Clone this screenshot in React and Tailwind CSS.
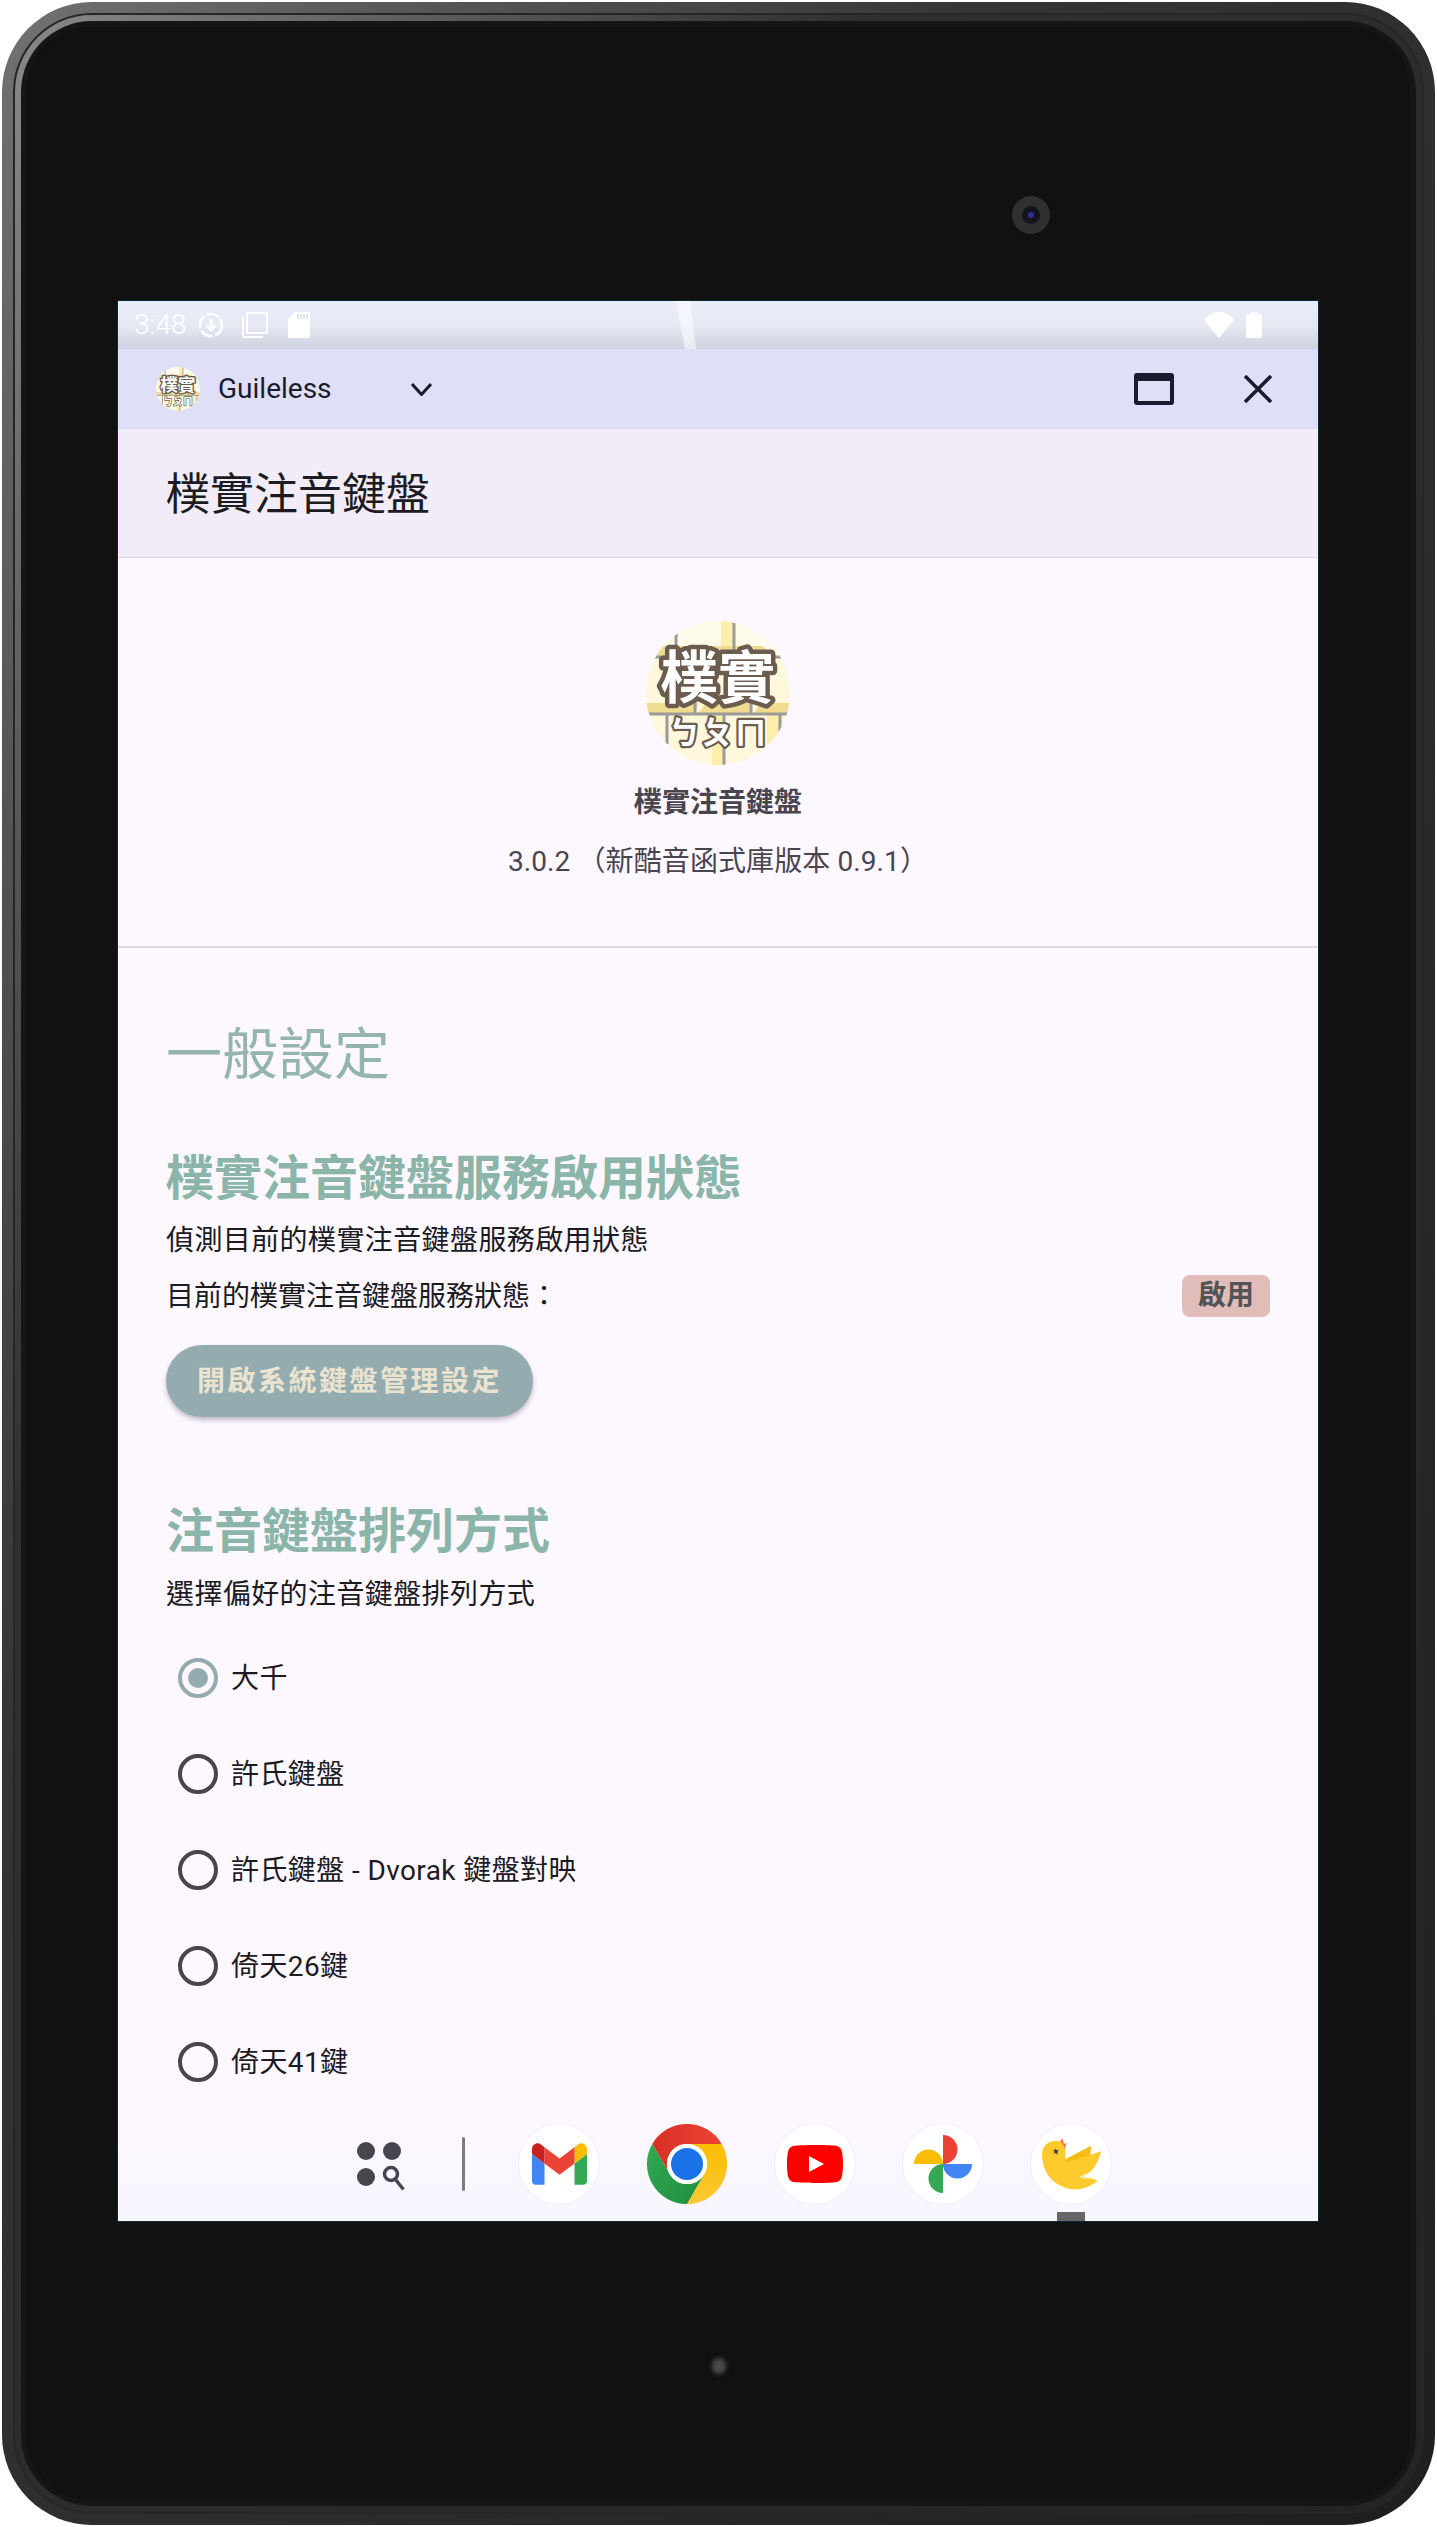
import React from 'react';

const layouts = ['大千', '許氏鍵盤', '許氏鍵盤 - Dvorak 鍵盤對映', '倚天26鍵', '倚天41鍵'];

function AppLogo({ className }) {
  return (
    <svg viewBox="0 0 144 144" className={className}>
      <circle cx="72" cy="72" r="72" fill="#fff8dc" />
      <rect x="0" y="0" width="144" height="36" fill="#fffbea" />
      <path d="M75 0h12v30l-12-5z" fill="#fdeeaa" />
      <path d="M4 36l12-11h100l14 11z" fill="#efdc90" />
      <path d="M0 93V82h52l-3 11zM52 93l8-11h44l1 11zM108 93l6-11h30v11z" fill="#efdc90" />
      <path d="M66 93h12v51H66zM121 93h12v30h-12z" fill="#fdeeaa" />
      <path d="M0 36h144M0 93h144M88 0v36M30 10v26M49 70v23M105 70v23M21 93v30M78 93v51M134 93v18" stroke="#9a9a9a" strokeWidth="3" fill="none" />
      <text x="72" y="77" textAnchor="middle" fontSize="57" fontWeight="700" fill="#ffffff" stroke="#6b5c50" strokeWidth="9" strokeLinejoin="round" paintOrder="stroke" className="font-['Noto_Sans_CJK_TC',sans-serif]">樸實</text>
      <text x="72" y="123" textAnchor="middle" fontSize="32" fontWeight="700" letterSpacing="1" fill="#ffffff" stroke="#6b5c50" strokeWidth="4.5" strokeLinejoin="round" paintOrder="stroke" className="font-['Noto_Sans_CJK_TC',sans-serif]">ㄅㄆㄇ</text>
    </svg>
  );
}

function StatusBar() {
  return (
    <div className="relative h-[48px] flex items-center pl-[16px] pr-[56px] bg-linear-to-b from-[#e9edf7] via-[#e6e9f4] to-[#cfd2de] text-white overflow-hidden">
      <svg className="absolute left-[556px] top-0 h-[48px] w-[30px]" viewBox="0 0 30 48">
        <path d="M2 0h14l6 48H11z" fill="#ffffff" opacity="0.55" />
      </svg>
      <span className="text-[28px] leading-[48px] font-[Roboto,sans-serif] font-light w-[53px]">3:48</span>
      <svg viewBox="0 0 26 26" className="w-[26px] h-[26px] ml-[11px]" fill="none" stroke="#ffffff" strokeWidth="2.5">
        <circle cx="13" cy="13" r="11" strokeDasharray="13 2.5" />
        <path d="M13 7v11M8.5 13.5 13 18l4.5-4.5" />
      </svg>
      <svg viewBox="0 0 26 26" className="w-[26px] h-[26px] ml-[18px]" fill="none" stroke="#ffffff" strokeWidth="2">
        <rect x="5" y="1" width="20" height="20" />
        <path d="M1 5v18a2 2 0 0 0 2 2h18" />
      </svg>
      <svg viewBox="0 0 22 26" className="w-[22px] h-[26px] ml-[20px]">
        <path d="M7 0h13a2 2 0 0 1 2 2v22a2 2 0 0 1-2 2H2a2 2 0 0 1-2-2V7z" fill="#ffffff" />
        <path d="M10 2v5M13 2v5M16 2v5M19 2v5" stroke="#d8dbe6" strokeWidth="1.5" />
      </svg>
      <div className="ml-auto flex items-center gap-[12px]">
        <svg viewBox="0 0 30 26" className="w-[30px] h-[26px]">
          <path d="M0 8C4 3 9 0 15 0s11 3 15 8L15 26z" fill="#ffffff" />
        </svg>
        <svg viewBox="0 0 16 26" className="w-[16px] h-[26px]">
          <path d="M5 0h6v2h3a2 2 0 0 1 2 2v20a2 2 0 0 1-2 2H2a2 2 0 0 1-2-2V4a2 2 0 0 1 2-2h3z" fill="#ffffff" />
        </svg>
      </div>
    </div>
  );
}

function CaptionBar() {
  return (
    <div className="h-[80px] flex items-center bg-[#dfdff7] pl-[38px] pr-[46px] text-[#1a1c2e]">
      <AppLogo className="w-[44px] h-[44px] rounded-full" />
      <span className="ml-[18px] text-[28px] leading-[36px] font-[Roboto,sans-serif] w-[113px]">Guileless</span>
      <svg viewBox="0 0 21 13" className="ml-[80px] w-[21px] h-[13px]" fill="none" stroke="#1a1c2e" strokeWidth="3">
        <path d="M1 1l9.5 10.5L20 1" />
      </svg>
      <svg viewBox="0 0 40 32" className="ml-auto w-[40px] h-[32px]">
        <rect x="0" y="0" width="40" height="32" rx="3" fill="#1a1c2e" />
        <rect x="4" y="8" width="32" height="20" fill="#dfdff7" />
      </svg>
      <svg viewBox="0 0 28 28" className="ml-[70px] w-[28px] h-[28px]" stroke="#1a1c2e" strokeWidth="3.6">
        <path d="M1 1l26 26M27 1L1 27" />
      </svg>
    </div>
  );
}

function GmailIcon() {
  return (
    <svg viewBox="52 42 88 66" className="w-[55px] h-[42px]">
      <path fill="#4285f4" d="M58 108h14V74L52 59v43c0 3.32 2.69 6 6 6" />
      <path fill="#34a853" d="M120 108h14c3.32 0 6-2.69 6-6V59l-20 15" />
      <path fill="#fbbc04" d="M120 48v26l20-15v-8c0-7.42-8.47-11.65-14.4-7.2" />
      <path fill="#ea4335" d="M72 74V48l24 18 24-18v26L96 92" />
      <path fill="#c5221f" d="M52 51v8l20 15V48l-5.6-4.2c-5.94-4.45-14.4-.22-14.4 7.2" />
    </svg>
  );
}

function ChromeIcon() {
  return (
    <svg viewBox="0 0 48 48" className="w-[80px] h-[80px]">
      <defs>
        <linearGradient id="chromeRed" x1="0" y1="0" x2="1" y2="0">
          <stop offset="0" stopColor="#d93025" />
          <stop offset="1" stopColor="#ea4335" />
        </linearGradient>
        <linearGradient id="chromeGreen" x1="0" y1="0" x2="1" y2="1">
          <stop offset="0" stopColor="#34a853" />
          <stop offset="1" stopColor="#1e8e3e" />
        </linearGradient>
        <linearGradient id="chromeYellow" x1="0" y1="0" x2="0" y2="1">
          <stop offset="0" stopColor="#fbbc04" />
          <stop offset="1" stopColor="#fcc934" />
        </linearGradient>
      </defs>
      <path fill="url(#chromeRed)" d="M3.2 12A24 24 0 0 1 44.8 12H24A12 12 0 0 0 13.6 30z" />
      <path fill="url(#chromeYellow)" d="M44.8 12A24 24 0 0 1 24 48L34.4 30A12 12 0 0 0 24 12z" />
      <path fill="url(#chromeGreen)" d="M3.2 12A24 24 0 0 0 24 48L34.4 30A12 12 0 0 1 13.6 30z" />
      <circle cx="24" cy="24" r="12" fill="#ffffff" />
      <circle cx="24" cy="24" r="9.6" fill="#1a73e8" />
    </svg>
  );
}

function YoutubeIcon() {
  return (
    <svg viewBox="0 0 56 38" className="w-[56px] h-[38px]">
      <path fill="#ff0000" d="M54.8 5.9a7 7 0 0 0-5-5C45.4 0 28 0 28 0S10.6 0 6.2 1a7 7 0 0 0-5 5C0 10.3 0 19 0 19s0 8.7 1.2 13.1a7 7 0 0 0 5 5C10.6 38 28 38 28 38s17.4 0 21.8-1a7 7 0 0 0 5-5C56 27.7 56 19 56 19s0-8.7-1.2-13.1z" />
      <path fill="#ffffff" d="M22 27l15-8-15-8z" />
    </svg>
  );
}

function PhotosIcon() {
  return (
    <svg viewBox="0 0 58 58" className="w-[58px] h-[58px]">
      <path fill="#ea4335" d="M29 0A14.5 14.5 0 0 1 29 29z" />
      <path fill="#fbbc04" d="M0 29A14.5 14.5 0 0 1 29 29z" />
      <path fill="#4285f4" d="M29 29H58A14.5 14.5 0 0 1 29 29z" />
      <path fill="#34a853" d="M29 29V58A14.5 14.5 0 0 1 29 29z" />
    </svg>
  );
}

function BirdIcon() {
  return (
    <svg viewBox="390 15 240 240" className="w-[80px] h-[80px]">
      <path fill="#ff7043" d="M470 78l14-20 5 17 8-4-6 22z" />
      <path fill="#f4bd16" d="M490 122l80-42-2 30-76 24z" />
      <path fill="#ffca2c" d="M423 105c0-25 20-40 42-40 20 0 30 20 28 45v23l107-36c-10 43-30 68-60 75 15 3 35 6 50 13-30 25-70 33-100 20-45-15-67-55-67-100z" />
      <path fill="none" stroke="#ffffff" strokeWidth="3" d="M535 170c8 6 14 8 22 8M548 166c4 6 8 9 16 12" />
      <path fill="#3a3a3a" d="M463 87l4 7 7-1-5 6 2 8-7-5-6 3 3-7-5-5 7 0z" />
    </svg>
  );
}

function DockApp({ children, running }) {
  return (
    <div className="relative w-[80px] h-[80px] rounded-full bg-white shadow-[0_0_2px_rgba(0,0,0,0.1)] flex items-center justify-center">
      {children}
      {running && <div className="absolute left-[26px] top-[88px] w-[28px] h-[9px] bg-[#666666]" />}
    </div>
  );
}

function Taskbar() {
  return (
    <div className="h-[120px] flex items-center pl-[239px] pt-[6px] bg-linear-to-b from-[#fdf7ff] to-[#f8f6ff]">
      <svg viewBox="0 0 50 44" className="w-[50px] h-[44px] overflow-visible" fill="#49454f">
        <circle cx="9" cy="9" r="9" />
        <circle cx="35" cy="9" r="9" />
        <circle cx="9" cy="35" r="9" />
        <circle cx="34" cy="32" r="6.5" fill="none" stroke="#49454f" strokeWidth="3.5" />
        <path d="M38.5 37.5l8 10" stroke="#49454f" strokeWidth="3.5" fill="none" />
      </svg>
      <div className="ml-[55px] w-[3px] h-[54px] rounded-full bg-[#7d7a84]" />
      <div className="ml-[54px] flex gap-[48px]">
        <DockApp><GmailIcon /></DockApp>
        <DockApp><ChromeIcon /></DockApp>
        <DockApp><YoutubeIcon /></DockApp>
        <DockApp><PhotosIcon /></DockApp>
        <DockApp running><BirdIcon /></DockApp>
      </div>
    </div>
  );
}

function RadioRow({ label, selected }) {
  return (
    <div className="h-[96px] pl-[12px] flex items-center gap-[13px]">
      <div className={`w-[40px] h-[40px] rounded-full border-[4px] flex items-center justify-center ${selected ? 'border-[#94acb0]' : 'border-[#49454f]'}`}>
        {selected && <div className="w-[20px] h-[20px] rounded-full bg-[#94acb0]" />}
      </div>
      <span className="pt-[2px] text-[28px] leading-[40px] tracking-[0.4px] text-[#1c1b1f]">{label}</span>
    </div>
  );
}

function Settings() {
  return (
    <div className="flex-1 overflow-hidden bg-[#fdf7ff] font-[Roboto,'Noto_Sans_CJK_TC',sans-serif]">
      <div className="flex flex-col items-center pt-[63px] pb-[64px] text-[#49454f]">
        <AppLogo className="w-[144px] h-[144px] rounded-full" />
        <p className="mt-[18px] text-[28px] leading-[40px] font-bold">樸實注音鍵盤</p>
        <p className="mt-[19px] text-[28px] leading-[40px] tracking-[0.1px]">3.0.2 （新酷音函式庫版本 0.9.1）</p>
      </div>
      <div className="h-[2px] bg-[#dcdadc]" />
      <div className="px-[48px] pt-[71px]">
        <h2 className="text-[56px] leading-[72px] font-normal text-[#94b5ad]">一般設定</h2>
        <h3 className="mt-[56px] text-[48px] leading-[64px] font-bold text-[#8ab5a8]">樸實注音鍵盤服務啟用狀態</h3>
        <p className="mt-[10px] text-[28px] leading-[40px] tracking-[0.4px] text-[#1c1b1f]">偵測目前的樸實注音鍵盤服務啟用狀態</p>
        <div className="mt-[14px] flex items-center justify-between">
          <span className="pt-[2px] text-[28px] leading-[40px] text-[#1c1b1f]">目前的樸實注音鍵盤服務狀態：</span>
          <span className="w-[88px] h-[42px] flex items-center justify-center rounded-[8px] bg-[#e0bdb8] text-[28px] leading-[40px] font-bold text-[#545454]">啟用</span>
        </div>
        <button className="mt-[28px] pt-[2px] w-[367px] h-[72px] rounded-full bg-[#94acb0] text-[28px] font-bold tracking-[2.5px] text-[#e9e3cf] shadow-[0_3px_5px_rgba(0,0,0,0.25)]">開啟系統鍵盤管理設定</button>
        <h3 className="mt-[83px] text-[48px] leading-[64px] font-bold text-[#8ab5a8]">注音鍵盤排列方式</h3>
        <p className="mt-[11px] text-[28px] leading-[40px] tracking-[0.4px] text-[#1c1b1f]">選擇偏好的注音鍵盤排列方式</p>
        <div className="mt-[15px]">
          {layouts.map((name, i) => (
            <RadioRow key={name} label={name} selected={i === 0} />
          ))}
        </div>
      </div>
    </div>
  );
}

export default function App() {
  return (
    <div className="relative w-[1437px] h-[2527px] bg-white p-[2px] font-[Roboto,'Noto_Sans_CJK_TC',sans-serif]">
      <div className="h-full rounded-[90px] bg-linear-to-br from-[#727272] via-[#343434] via-35% to-[#1f1f1f] p-[11px]">
        <div className="h-full rounded-[79px] bg-[#262626] p-[2px]">
          <div className="h-full rounded-[77px] bg-linear-to-br from-[#8a8a8a] via-[#303030] via-30% to-[#242424] p-[6px]">
            <div className="h-full rounded-[71px] bg-[#161616] p-[6px]">
              <div className="h-full rounded-[62px] bg-[#111111] pt-[274px] pl-[91px]">
                <div className="w-[1200px] h-[1920px] flex flex-col overflow-hidden shadow-[0_0_0_1px_#0b2a38]">
                  <StatusBar />
                  <CaptionBar />
                  <div className="h-[129px] flex items-center px-[48px] pt-[4px] bg-[#f1ecf8] border-b border-[#dcd8e0] shadow-[0_1px_3px_rgba(0,0,0,0.12)]">
                    <h1 className="text-[44px] leading-[56px] font-normal text-[#1c1b1f]">樸實注音鍵盤</h1>
                  </div>
                  <Settings />
                  <Taskbar />
                </div>
              </div>
            </div>
          </div>
        </div>
      </div>
      {/* camera and light sensor sit on the bezel */}
      <div className="absolute left-[1012px] top-[196px] w-[38px] h-[38px] rounded-full bg-[#303030] flex items-center justify-center">
        <div className="w-[18px] h-[18px] rounded-full bg-[#14141c] flex items-center justify-center">
          <div className="w-[6px] h-[6px] rounded-full bg-[#2c2f9c]" />
        </div>
      </div>
      <div className="absolute left-[712px] top-[2358px] w-[14px] h-[16px] rounded-full bg-[#4a4a4a] blur-[2px]" />
    </div>
  );
}
